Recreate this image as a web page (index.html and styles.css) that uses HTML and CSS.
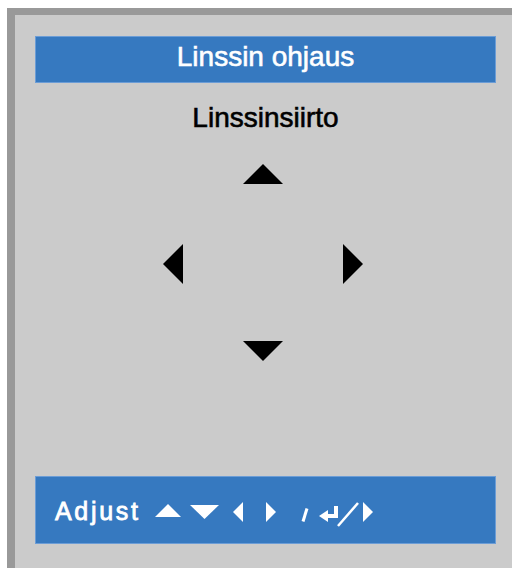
FILE: index.html
```html
<!DOCTYPE html>
<html>
    <head>
        <link rel="stylesheet" href="styles.css">
        <title>Linssin ohjaus</title>
    </head>
    <body>
        <div class="frame">
            <div class="title-bar">Linssin ohjaus</div>
            <div class="subtitle">Linssinsiirto</div>

            <div class="pad">
                <svg class="arrow-v" width="40" height="20" viewBox="0 0 40 20"><polygon points="20,0 40,20 0,20"/></svg>
                <div class="pad-middle">
                    <svg class="arrow-h" width="20" height="40" viewBox="0 0 20 40"><polygon points="0,20 20,0 20,40"/></svg>
                    <svg class="arrow-h" width="20" height="40" viewBox="0 0 20 40"><polygon points="0,0 20,20 0,40"/></svg>
                </div>
                <svg class="arrow-v down" width="40" height="20" viewBox="0 0 40 20"><polygon points="0,0 40,0 20,20"/></svg>
            </div>

            <div class="help-bar">
                <span class="help-text">Adjust</span>
                <svg class="key key-up" width="26" height="13" viewBox="0 0 26 13"><polygon points="13,0 26,13 0,13"/></svg>
                <svg class="key key-down" width="29" height="14" viewBox="0 0 29 14"><polygon points="0,0 29,0 14.5,14"/></svg>
                <svg class="key key-left" width="10" height="20" viewBox="0 0 10 20"><polygon points="0,10 10,0 10,20"/></svg>
                <svg class="key key-right" width="10" height="20" viewBox="0 0 10 20"><polygon points="0,0 10,10 0,20"/></svg>
                <svg class="key key-slash" width="8" height="14" viewBox="0 0 8 14"><line x1="2" y1="13.5" x2="6" y2="0.5" stroke="#fff" stroke-width="3"/></svg>
                <svg class="key key-enter" width="55" height="25" viewBox="0 0 55 25">
                    <polygon points="0,14 9,8 9,20"/>
                    <rect x="6" y="12" width="13" height="4"/>
                    <rect x="15" y="4" width="4" height="12"/>
                    <line x1="19" y1="24" x2="39" y2="1" stroke="#fff" stroke-width="2.5"/>
                    <polygon points="44,0 54,10 44,20"/>
                </svg>
            </div>
        </div>
    </body>
</html>
```

FILE: styles.css
```css
body {
    margin: 0;
    padding: 0;
    background-color: #ffffff;
    font-family: "Liberation Sans", Arial, sans-serif;
}

.frame {
    box-sizing: border-box;
    height: 560px;
    margin: 8px 0 0 7px;
    padding: 21px 16px 24px 20px;
    border-top: 7px solid #999999;
    border-left: 8px solid #999999;
    background-color: #cbcbcb;
    display: flex;
    flex-direction: column;
}

.title-bar {
    box-sizing: border-box;
    height: 47px;
    padding-bottom: 6px;
    border: 1px solid #6c9dd6;
    background-color: #3679c0;
    color: #ffffff;
    font-size: 28px;
    line-height: 39px;
    text-align: center;
    -webkit-text-stroke: 0.6px #ffffff;
}

.subtitle {
    margin-top: 19px;
    font-size: 28px;
    line-height: 32px;
    color: #000000;
    text-align: center;
    -webkit-text-stroke: 0.6px #000000;
}

.pad {
    margin-top: 30px;
    display: flex;
    flex-direction: column;
    align-items: center;
    padding-right: 6px;
}

.pad svg {
    display: block;
    fill: #000000;
}

.pad-middle {
    margin-top: 60px;
    display: flex;
    gap: 160px;
}

.down {
    margin-top: 57px;
}

.help-bar {
    box-sizing: border-box;
    margin-top: auto;
    height: 68px;
    padding-left: 19px;
    border: 1px solid #6c9dd6;
    background-color: #3679c0;
    color: #ffffff;
    display: flex;
    align-items: center;
}

.help-text {
    font-size: 25px;
    letter-spacing: 2.7px;
    margin-top: 2px;
    -webkit-text-stroke: 0.8px #ffffff;
}

.key {
    display: block;
    fill: #ffffff;
}

.key-up {
    margin-left: 14px;
    margin-top: 1px;
}

.key-down {
    margin-left: 9px;
    margin-top: 4px;
}

.key-left {
    margin-left: 14px;
    margin-top: 4px;
}

.key-right {
    margin-left: 23px;
    margin-top: 4px;
}

.key-slash {
    margin-left: 25px;
    margin-top: 9px;
}

.key-enter {
    margin-left: 10px;
    margin-top: 9px;
}
```
